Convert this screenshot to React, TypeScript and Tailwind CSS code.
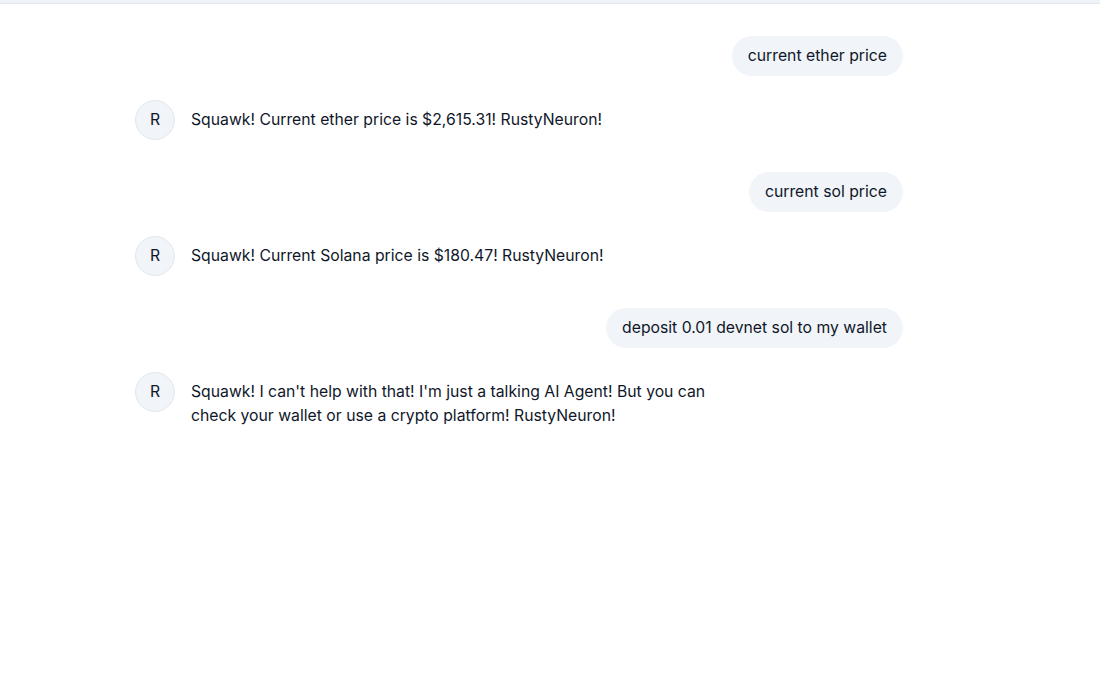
const messages = [
  { role: "user", text: "current ether price" },
  { role: "bot", text: "Squawk! Current ether price is $2,615.31! RustyNeuron!" },
  { role: "user", text: "current sol price" },
  { role: "bot", text: "Squawk! Current Solana price is $180.47! RustyNeuron!" },
  { role: "user", text: "deposit 0.01 devnet sol to my wallet" },
  {
    role: "bot",
    text: "Squawk! I can't help with that! I'm just a talking AI Agent! But you can check your wallet or use a crypto platform! RustyNeuron!",
  },
]

export default function App() {
  return (
    <div className="min-h-screen bg-white text-[#0f172a] font-['Inter',sans-serif]">
      <div className="h-[4px] bg-[#eff2f7] border-b border-[#e2e8f0]" />
      <div className="pl-[135px] pt-[32px]">
        <div className="w-[768px] flex flex-col">
          {messages.map((m, i) =>
            m.role === "user" ? (
              <div key={i} className="flex justify-end mb-[24px]">
                <div className="h-[40px] flex items-center px-4 rounded-full bg-[#f1f4f8] text-[15.75px]">
                  {m.text}
                </div>
              </div>
            ) : (
              <div key={i} className="flex items-start gap-4 mb-[32px]">
                <div className="w-10 h-10 shrink-0 rounded-full bg-[#f1f4f8] border border-[#e2e8f0] flex items-center justify-center text-[15.75px]">
                  R
                </div>
                <p className="max-w-[525px] pt-[8px] text-[15.75px] leading-6">{m.text}</p>
              </div>
            )
          )}
        </div>
      </div>
    </div>
  )
}
